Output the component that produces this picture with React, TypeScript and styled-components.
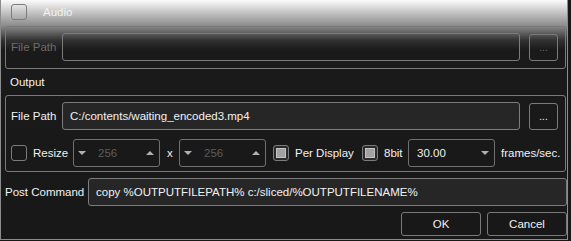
import styled, { createGlobalStyle } from 'styled-components';

const GlobalStyle = createGlobalStyle`
  html, body {
    margin: 0;
    padding: 0;
    background: #181818;
  }
  body {
    font-family: "Liberation Sans", Arial, sans-serif;
    font-size: 11.5px;
    color: #ececec;
  }
`;

const App = () => {
  return (
    <>
      <GlobalStyle />
      <Window>
        <HeaderRow>
          <CheckBox />
          <Label>Audio</Label>
        </HeaderRow>

        <Group $ghost>
          <PathRow>
            <FieldLabel $disabled>File Path</FieldLabel>
            <TextInput $disabled value="" readOnly />
            <DotsButton $disabled>...</DotsButton>
          </PathRow>
        </Group>

        <SectionTitle>Output</SectionTitle>

        <Group>
          <PathRow>
            <FieldLabel>File Path</FieldLabel>
            <TextInput value="C:/contents/waiting_encoded3.mp4" readOnly />
            <DotsButton>...</DotsButton>
          </PathRow>
          <OptionsRow>
            <CheckBox />
            <Label $width={40}>Resize</Label>
            <SpinBox>
              <Arrow $up={false} />
              <SpinValue>256</SpinValue>
              <Arrow $up />
            </SpinBox>
            <Label $width={12}>x</Label>
            <SpinBox>
              <Arrow $up={false} />
              <SpinValue>256</SpinValue>
              <Arrow $up />
            </SpinBox>
            <CheckBox $checked />
            <Label $width={67}>Per Display</Label>
            <CheckBox $checked />
            <Label $width={24}>8bit</Label>
            <Combo>
              <span>30.00</span>
              <Arrow $up={false} />
            </Combo>
            <Label>frames/sec.</Label>
          </OptionsRow>
        </Group>

        <CommandRow>
          <CommandLabel>Post Command</CommandLabel>
          <TextInput value="copy %OUTPUTFILEPATH% c:/sliced/%OUTPUTFILENAME%" readOnly />
        </CommandRow>

        <ButtonRow>
          <PushButton>OK</PushButton>
          <PushButton>Cancel</PushButton>
        </ButtonRow>
      </Window>
    </>
  );
};

export default App;

const Window = styled.div`
  box-sizing: border-box;
  width: 568px;
  height: 240px;
  display: flex;
  flex-direction: column;
  border: 1px solid #8c8c8c;
  border-top: none;
  background: linear-gradient(
    to bottom,
    #fbfbfb 0px,
    #c6c6c6 12px,
    #8a8a8a 26px,
    #333333 40px,
    #1a1a1a 50px,
    #181818 100%
  );
`;

const HeaderRow = styled.div`
  height: 26px;
  display: flex;
  align-items: center;
  gap: 10px;
  padding: 0 0 2px 10px;
  box-sizing: border-box;
`;

const Label = styled.span<{ $width?: number }>`
  color: #f2f2f2;
  white-space: nowrap;
  flex: none;
  width: ${({ $width }) => ($width ? `${$width}px` : 'auto')};
`;

const SectionTitle = styled.div`
  height: 26px;
  display: flex;
  align-items: center;
  padding-left: 9px;
  color: #f2f2f2;
`;

const Group = styled.div<{ $ghost?: boolean }>`
  margin: 0 1px 0 4px;
  padding: 6px 7px 4px 5px;
  border: 1px solid #7a7a7a;
  border-radius: 3px;
  display: flex;
  flex-direction: column;
  gap: 9px;
  height: ${({ $ghost }) => ($ghost ? '43px' : '77px')};
  box-sizing: border-box;
`;

const PathRow = styled.div`
  display: flex;
  align-items: center;
`;

const FieldLabel = styled.span<{ $disabled?: boolean }>`
  width: 51px;
  flex: none;
  white-space: nowrap;
  color: ${({ $disabled }) => ($disabled ? '#6c6c6c' : '#f2f2f2')};
`;

const TextInput = styled.input<{ $disabled?: boolean }>`
  flex: 1;
  min-width: 0;
  height: 28px;
  box-sizing: border-box;
  padding: 0 7px;
  border: 1px solid #7c7c7c;
  border-radius: 3px;
  outline: none;
  font: inherit;
  color: #f2f2f2;
  background: ${({ $disabled }) => ($disabled ? 'transparent' : '#262626')};
`;

const DotsButton = styled.div<{ $disabled?: boolean }>`
  flex: none;
  width: 29px;
  height: 27px;
  margin-left: 9px;
  box-sizing: border-box;
  border: 1px solid #7a7a7a;
  border-radius: 3px;
  display: flex;
  align-items: center;
  justify-content: center;
  font-size: 10px;
  color: ${({ $disabled }) => ($disabled ? '#6c6c6c' : '#f2f2f2')};
`;

const OptionsRow = styled.div`
  display: flex;
  align-items: center;
  height: 28px;
`;

const CheckBox = styled.span<{ $checked?: boolean }>`
  flex: none;
  position: relative;
  width: 16px;
  height: 16px;
  margin-right: 6px;
  box-sizing: border-box;
  border: 1px solid #7c7c7c;
  border-radius: 3px;
  background: ${({ $checked }) => ($checked ? '#2a2a2a' : 'transparent')};

  &::after {
    content: '';
    display: ${({ $checked }) => ($checked ? 'block' : 'none')};
    position: absolute;
    left: 2px;
    top: 2px;
    width: 10px;
    height: 10px;
    box-sizing: border-box;
    background: #a2a2a2;
    border: 1px solid #c4c4c4;
  }
`;

const SpinBox = styled.div`
  flex: none;
  width: 87px;
  height: 28px;
  box-sizing: border-box;
  margin-right: 7px;
  padding: 0 5px 0 4px;
  border: 1px solid #707070;
  border-radius: 3px;
  display: flex;
  align-items: center;
`;

const SpinValue = styled.span`
  flex: 1;
  padding-left: 12px;
  color: #5c5c5c;
`;

const Arrow = styled.span<{ $up: boolean }>`
  flex: none;
  width: 0;
  height: 0;
  border-left: 4px solid transparent;
  border-right: 4px solid transparent;
  ${({ $up }) =>
    $up ? 'border-bottom: 4px solid #b0b0b0;' : 'border-top: 4px solid #b0b0b0;'}
`;

const Combo = styled.div`
  flex: none;
  width: 87px;
  height: 28px;
  box-sizing: border-box;
  margin-right: 6px;
  padding: 0 5px 0 8px;
  border: 1px solid #707070;
  border-radius: 3px;
  display: flex;
  align-items: center;
  justify-content: space-between;
  color: #f2f2f2;
`;

const CommandRow = styled.div`
  display: flex;
  align-items: center;
  padding: 6px 0 6px 4px;
`;

const CommandLabel = styled.span`
  width: 83px;
  flex: none;
  white-space: nowrap;
  color: #f2f2f2;
`;

const ButtonRow = styled.div`
  display: flex;
  justify-content: flex-end;
  gap: 6px;
`;

const PushButton = styled.div`
  width: 80px;
  height: 24px;
  box-sizing: border-box;
  border: 1px solid #7a7a7a;
  border-radius: 3px;
  display: flex;
  align-items: center;
  justify-content: center;
  color: #f2f2f2;
`;
